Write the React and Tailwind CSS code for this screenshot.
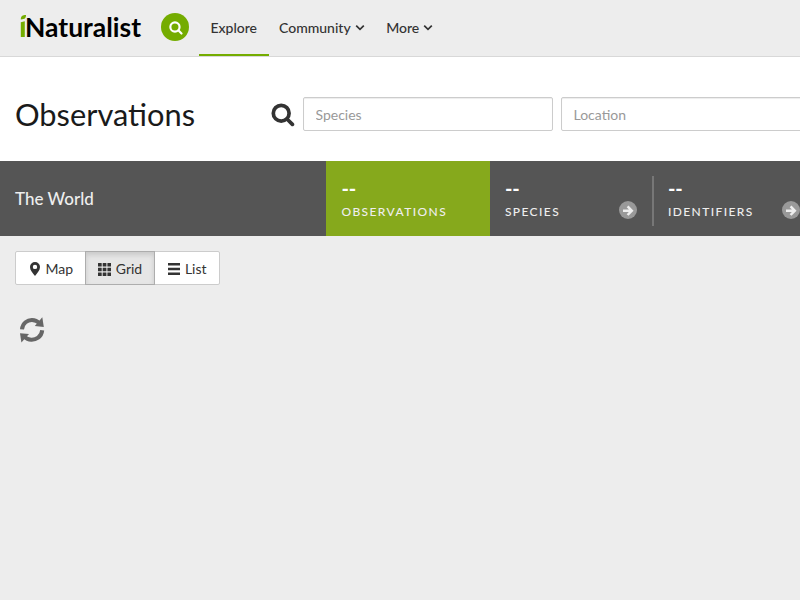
const SearchIcon = ({ className, width = 3.7 }) => (
  <svg viewBox="0 0 24 24" className={className} fill="none" stroke="currentColor" strokeWidth={width} strokeLinecap="round">
    <circle cx="10.2" cy="10.2" r="7.9" />
    <path d="M16 16 L21.4 21.4" />
  </svg>
);

const Chevron = () => (
  <svg viewBox="0 0 10 8" className="mt-px h-2 w-[10px]" fill="none" stroke="currentColor" strokeWidth="1.7">
    <path d="M1.2 1.6 L5 5.4 L8.8 1.6" />
  </svg>
);

const Logo = () => (
  <svg viewBox="0 0 128 36" className="ml-[18px] h-9 w-32 overflow-visible">
    <path d="M2.8 13.2 L6.8 12.3 V28 H2.8 Z" fill="#74ac00" />
    <path d="M2.8 10.6 C2.8 6.8 4.4 6.1 8 6 C8 8.8 7.2 10.1 2.8 10.6 Z" fill="#74ac00" />
    <text x="7" y="27.8" textLength="116" lengthAdjust="spacingAndGlyphs" className="fill-black font-[Lato,sans-serif] text-[27.5px] font-bold">Naturalist</text>
  </svg>
);

const ArrowBadge = () => (
  <svg viewBox="0 0 18 18" className="mt-[40px] h-[18px] w-[18px] shrink-0">
    <circle cx="9" cy="9" r="9" fill="#999" />
    <path d="M4 9.7 H12.4 M8.6 5.4 L12.8 9.7 L8.6 14" fill="none" stroke="#eee" strokeWidth="2.5" />
  </svg>
);

const Stat = ({ label }) => (
  <div className="pt-4">
    <div className="h-[22px] text-[20px] leading-[22px] font-bold text-white">--</div>
    <div className="mt-[4px] text-[12px] leading-[17px] font-medium tracking-[1.4px] text-[#eee]">{label}</div>
  </div>
);

export default function App() {
  return (
    <div className="h-[600px] w-[800px] overflow-hidden bg-[#ededed] font-[Lato,sans-serif] text-[14px] text-[#333]">
      <header className="flex h-[57px] items-start border-b border-[#d8d8d8]">
        <div className="pt-[9px]"><Logo /></div>
        <button className="mt-[13px] ml-[15px] flex h-7 w-7 items-center justify-center rounded-full bg-[#74ac00] pt-px pl-px text-white">
          <SearchIcon className="h-[14px] w-[14px]" width={3.7} />
        </button>
        <nav className="ml-[10px] flex h-14 font-medium">
          <a className="flex w-[69.5px] items-center justify-center border-b-2 border-[#74ac00]">Explore</a>
          <a className="flex items-center gap-[4px] pb-[2px] pl-[10.5px]">Community<Chevron /></a>
          <a className="flex items-center gap-[4px] pb-[2px] pl-[21.5px]">More<Chevron /></a>
        </nav>
      </header>

      <section className="flex h-[104px] items-start bg-white">
        <h1 className="w-[270.5px] shrink-0 pt-[38px] pl-[15px] text-[30.8px] leading-[40px] text-[#1a1a1a]">Observations</h1>
        <SearchIcon className="mt-[46px] h-6 w-6 shrink-0" />
        <div className="mt-10 ml-[8px] flex shrink-0 gap-2">
          <input placeholder="Species" className="h-[34px] w-[250px] rounded-[2px] border border-[#ccc] bg-white px-3 pt-px shadow-[inset_0_1px_1px_rgba(0,0,0,0.075)] placeholder:text-[#999]" />
          <input placeholder="Location" className="h-[34px] w-[250px] rounded-[2px] border border-[#ccc] bg-white px-3 pt-px shadow-[inset_0_1px_1px_rgba(0,0,0,0.075)] placeholder:text-[#999]" />
        </div>
      </section>

      <section className="flex h-[75px] bg-[#555]">
        <div className="flex w-[326.4px] shrink-0 items-center pl-[15px] text-[17px] font-medium text-[#eee]">The World</div>
        <div className="w-[164px] shrink-0 bg-[#86a91c] pl-[15px]"><Stat label="OBSERVATIONS" /></div>
        <div className="flex w-[163.5px] shrink-0 justify-between pl-[14.5px]">
          <Stat label="SPECIES" />
          <div className="flex gap-[14.5px]">
            <ArrowBadge />
            <div className="mt-[15px] h-[50px] w-[2px] bg-[#777]" />
          </div>
        </div>
        <div className="flex w-[146.5px] shrink-0 justify-between pl-[14px]">
          <Stat label="IDENTIFIERS" />
          <ArrowBadge />
        </div>
      </section>

      <main className="px-[15px] pt-[15px]">
        <div className="flex h-[34px] w-[204.5px] rounded-[2px] border border-[#ccc] bg-white">
          <button className="flex w-[69px] items-center justify-center gap-1 pt-px pl-[1.5px]">
            <svg viewBox="0 0 12 14" className="h-[14px] w-3" fill="currentColor">
              <path fillRule="evenodd" d="M6 0 A5 5 0 0 1 11 5 C11 8.4 8.4 10.7 6 14 C3.6 10.7 1 8.4 1 5 A5 5 0 0 1 6 0 Z M6 2.7 A2.2 2.2 0 1 0 6 7.1 A2.2 2.2 0 1 0 6 2.7 Z" />
            </svg>
            Map
          </button>
          <button className="-my-px flex w-[70px] items-center justify-center gap-[5px] border border-[#adadad] bg-[#e6e6e6] pt-px shadow-[inset_0_3px_5px_rgba(0,0,0,0.125)]">
            <svg viewBox="0 0 13 13" className="mt-px h-[13px] w-[13px]" fill="currentColor">
              {[0, 4.7, 9.4].flatMap((y) => [0, 4.7, 9.4].map((x) => <rect key={`${x}-${y}`} x={x} y={y} width="3.7" height="3.6" rx="0.3" />))}
            </svg>
            Grid
          </button>
          <button className="flex w-[63px] items-center justify-center gap-[5px] pt-px pl-[1.5px]">
            <svg viewBox="0 0 12 12" className="h-3 w-3" fill="currentColor">
              <path d="M0 0H12V2.4H0Z M0 4.8H12V7.2H0Z M0 9.6H12V12H0Z" />
            </svg>
            List
          </button>
        </div>
        <svg viewBox="0 0 26 26" className="mt-8 ml-1 h-[26px] w-[26px]">
          <path d="M3 12.3 C3.4 6 8.7 2.8 13 2.9 C16.5 3 18.7 4.4 20.5 6.2" fill="none" stroke="#666" strokeWidth="4" />
          <path d="M23.3 0.3 L24.8 10 L15.8 9 Z" fill="#666" />
          <path d="M23.2 13.3 C22.6 20.1 16.7 22.9 12.2 22.7 C8.8 22.6 6.8 21.2 5.2 19.6" fill="none" stroke="#666" strokeWidth="4" />
          <path d="M2.4 25.6 L1 16.2 L10 17 Z" fill="#666" />
        </svg>
      </main>
    </div>
  );
}
